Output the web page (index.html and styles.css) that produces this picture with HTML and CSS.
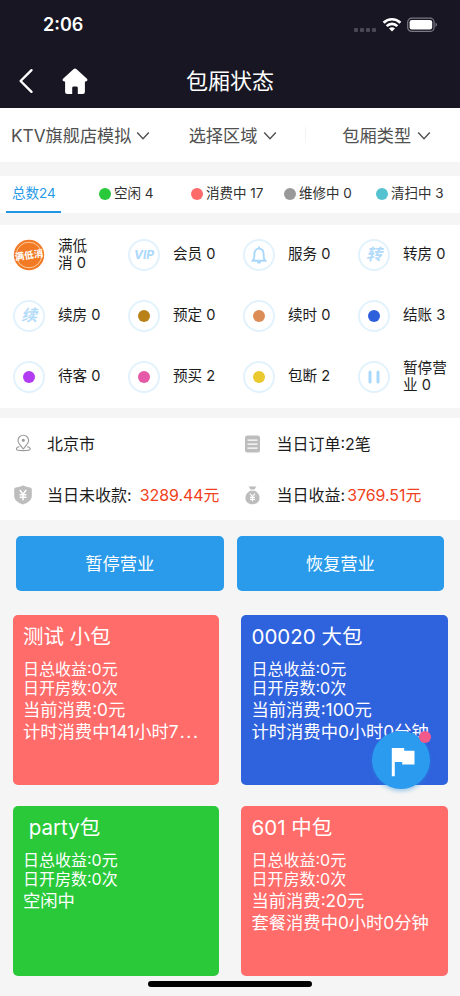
FILE: index.html
```
<!DOCTYPE html>
<html lang="zh-CN">
<head>
<meta charset="utf-8">
<title>包厢状态</title>
<link rel="stylesheet" href="styles.css">
</head>
<body>
<div class="app">
  <header class="header">
    <div class="statusbar">
      <span class="clock">2:06</span>
      <div class="signals">
        <span class="cell"><i></i><i></i><i></i><i></i></span>
        <svg width="20" height="16" viewBox="0 0 20 16" fill="none" stroke="#fff" stroke-width="2.7"><path d="M1.6 5.7a12 12 0 0 1 16.8 0"/><path d="M4.7 9.1a7.5 7.5 0 0 1 10.6 0"/><path d="M10 14.6 7 11.6a4.3 4.3 0 0 1 6 0z" fill="#fff" stroke="none"/></svg>
        <svg width="31" height="16" viewBox="0 0 31 16"><rect x=".7" y="1.2" width="26.4" height="13.2" rx="4" fill="none" stroke="#7b7a83" stroke-width="1.2"/><rect x="2.6" y="3.1" width="22.6" height="9.4" rx="2.2" fill="#fff"/><path d="M28.6 5.6q2.6 2.2 0 4.4z" fill="#8c8b93"/></svg>
      </div>
    </div>
    <div class="navbar">
      <svg class="back" width="16" height="26" viewBox="0 0 16 26" fill="none" stroke="#fff" stroke-width="2.4" stroke-linecap="round" stroke-linejoin="round"><path d="M13.5 2.2 2.6 13l10.9 10.8"/></svg>
      <svg class="home" width="26" height="27" viewBox="0 0 26 27" fill="#fff"><path d="M11.4 1.2q1.6-1.300 3.200 0L25 10.800q1.300 2-1 2.600h-1.100v10.500q0 2.100-2.100 2.100h-5v-6q0-1.400-1.400-1.400h-2.800q-1.400 0-1.400 1.400v6H5.200q-2.100 0-2.100-2.100V13.400H2Q-.3 12.800 1 10.800z"/></svg>
      <h1>包厢状态</h1>
    </div>
  </header>

  <nav class="filters">
    <div class="filter first">KTV旗舰店模拟<svg class="chev" viewBox="0 0 14 10"><path d="M1.2 1.6 7 7.8l5.8-6.2"/></svg></div>
    <div class="filter second">选择区域<svg class="chev" viewBox="0 0 14 10"><path d="M1.2 1.6 7 7.8l5.8-6.2"/></svg></div>
    <div class="filter third">包厢类型<svg class="chev" viewBox="0 0 14 10"><path d="M1.2 1.6 7 7.8l5.8-6.2"/></svg></div>
  </nav>

  <div class="totals">
    <div class="total active">总数24</div>
    <div class="total"><i class="dot green"></i>空闲 4</div>
    <div class="total"><i class="dot red"></i>消费中 17</div>
    <div class="total"><i class="dot gray"></i>维修中 0</div>
    <div class="total"><i class="dot teal"></i>清扫中 3</div>
  </div>

  <section class="states">
    <div class="state"><span class="ring full"><svg viewBox="0 0 32 32"><circle cx="16" cy="16" r="15.2" fill="#f27a25"/><circle cx="16" cy="16" r="12.8" fill="none" stroke="#ffd2a6" stroke-width=".9"/><text x="16" y="19.500" text-anchor="middle" transform="rotate(-8 16 16)">满低消</text></svg></span><span>满低<br>消 0</span></div>
    <div class="state"><span class="ring"><b class="vip">VIP</b></span><span>会员 0</span></div>
    <div class="state"><span class="ring"><svg class="bell" viewBox="0 0 18 20"><path d="M1.500 15.700h15M3.200 15.300c1.200-1.500 1.200-3 1.200-6.200C4.400 5.600 6.200 3.600 9 3.600s4.600 2 4.600 5.500c0 3.200 0 4.700 1.200 6.200M9 3.400V1.500M7.300 17.600h3.400"/></svg></span><span>服务 0</span></div>
    <div class="state"><span class="ring"><b class="glyph">转</b></span><span>转房 0</span></div>
    <div class="state"><span class="ring"><b class="glyph">续</b></span><span>续房 0</span></div>
    <div class="state"><span class="ring"><i class="dot brown"></i></span><span>预定 0</span></div>
    <div class="state"><span class="ring"><i class="dot orange"></i></span><span>续时 0</span></div>
    <div class="state"><span class="ring"><i class="dot blue"></i></span><span>结账 3</span></div>
    <div class="state"><span class="ring"><i class="dot purple"></i></span><span>待客 0</span></div>
    <div class="state"><span class="ring"><i class="dot pink"></i></span><span>预买 2</span></div>
    <div class="state"><span class="ring"><i class="dot yellow"></i></span><span>包断 2</span></div>
    <div class="state"><span class="ring"><svg class="pause" viewBox="0 0 12 14"><path d="M2 2v10M10 2v10"/></svg></span><span>暂停营<br>业 0</span></div>
  </section>

  <section class="summary">
    <div class="fact"><svg viewBox="0 0 20 20" fill="none" stroke="#999" stroke-width="1.1"><path d="M10.3 14.8C7.5 11.7 5 9.2 5 6.5a5.3 5.3 0 0 1 10.6 0c0 2.7-2.5 5.2-5.3 8.3z"/><circle cx="10.3" cy="6.2" r="1" fill="#999"/><path d="M6.5 12.700c-2 .3-3.100 1.200-3.100 2.200 0 1.200 2.800 1.700 6.900 1.700s6.900-.5 6.900-1.700c0-1-1.100-1.900-3.100-2.200"/></svg><span>北京市</span></div>
    <div class="fact"><svg viewBox="0 0 20 20"><rect x="2" y="1.5" width="15" height="17" rx="2.2" fill="#bdbdbd"/><path d="M4.500 6.200h10M4.500 10.200h10M4.500 14.200h10" stroke="#fff" stroke-width="1.3"/></svg><span>当日订单:2笔</span></div>
    <div class="fact"><svg viewBox="0 0 20 20"><path d="M3 2.600Q6.800 2.300 10 .6q3.200 1.700 7 2 1.800.2 1.800 2v6.200c0 4.800-4.200 7.200-8.800 8.700-4.600-1.500-8.800-3.900-8.800-8.700V4.600q0-1.800 1.800-2z" fill="#bdbdbd"/><path d="m6.800 5 3.200 4.200L13.200 5M10 9.200v6M6.600 9.700h6.800M6.600 12.300h6.800" fill="none" stroke="#fff" stroke-width="1.5"/></svg><span>当日未收款:<em class="gap">3289.44元</em></span></div>
    <div class="fact"><svg viewBox="0 0 20 20"><path d="M5.500 1.200q2 .8 4 0 2 .8 4 0l-2 3.300H7.600z" fill="#bdbdbd"/><path d="M7 5.700h5.100c2.700 1.800 4.500 4 4.500 7 0 4-2.800 6.500-7.100 6.500s-7.100-2.500-7.100-6.500c0-3 1.900-5.200 4.600-7z" fill="#bdbdbd"/><path d="m7 8.700 2.500 3 2.500-3M9.500 11.700v4.600M7 12.400h5M7 14.400h5" fill="none" stroke="#fff" stroke-width="1.1"/></svg><span>当日收益:<em>3769.51元</em></span></div>
  </section>

  <div class="actions">
    <button>暂停营业</button>
    <button>恢复营业</button>
  </div>

  <main class="rooms">
    <article class="room busy">
      <h2>测试 小包</h2>
      <p>日总收益:0元</p><p>日开房数:0次</p>
      <p class="big">当前消费:0元</p><p class="big">计时消费中141小时7<span class="more">...</span></p>
    </article>
    <article class="room checkout">
      <h2>00020 大包</h2>
      <p>日总收益:0元</p><p>日开房数:0次</p>
      <p class="big">当前消费:100元</p><p class="big">计时消费中0小时0分钟</p>
    </article>
    <article class="room idle">
      <h2>&nbsp;party包</h2>
      <p>日总收益:0元</p><p>日开房数:0次</p>
      <p class="big">空闲中</p>
    </article>
    <article class="room busy">
      <h2>601 中包</h2>
      <p>日总收益:0元</p><p>日开房数:0次</p>
      <p class="big">当前消费:20元</p><p class="big">套餐消费中0小时0分钟</p>
    </article>
  </main>

  <div class="fab"><svg width="24" height="30" viewBox="0 0 24 30" fill="#fff"><path d="M.8 1h12.400v2.700H23.500v13.800H11.200v-2.600H3.800v14.300H.8z"/></svg><i class="badge"></i></div>
  <div class="indicator"></div>
</div>
</body>
</html>
```
FILE: styles.css
```
* { box-sizing: border-box; margin: 0; padding: 0; }
body { font-family: Inter, "Noto Sans CJK SC", sans-serif; color: #1c1c1c; background: #f5f5f5; }
i, em { font-style: normal; }
svg { display: block; flex: none; }
.app { position: relative; width: 460px; height: 996px; overflow: hidden; white-space: nowrap; }

.header { height: 108px; background: #171622; color: #fff; }
.statusbar { height: 50px; display: flex; justify-content: space-between; padding: 0 22px 0 43px; }
.clock { font-size: 18px; font-weight: 600; line-height: 50px; }
.signals { display: flex; align-items: center; height: 50px; }
.cell { display: flex; gap: 2px; margin: 10px 6px 0 0; }
.cell i { width: 4px; height: 4px; border-radius: 1px; background: #494853; }
.signals svg + svg { margin-left: 5px; }
.navbar { height: 58px; display: grid; grid-template-columns: 62px 1fr 62px; align-items: center; }
.back { grid-area: 1 / 1; margin: 4px 0 0 18px; }
.home { grid-area: 1 / 1 / 2 / 3; margin: 4px 0 0 62px; }
.navbar h1 { grid-area: 1 / 2; text-align: center; font-size: 22px; font-weight: 400; line-height: 30px; margin-top: 3px; }

.filters { height: 54px; background: #fff; display: flex; font-size: 17.2px; color: #505050; }
.filter { display: flex; align-items: center; width: 154px; padding-bottom: 2px; }
.filter.first { width: 153px; padding-left: 11px; }
.filter.second { padding-left: 36px; background: linear-gradient(#f3f3f3, #f3f3f3) 100% 50% / 1px 16px no-repeat; }
.filter.third { padding-left: 36px; }
.chev { width: 14px; height: 10px; margin: 3px 0 0 6px; fill: none; stroke: #505050; stroke-width: 1.4; }
.first .chev { margin-left: 5px; }

.totals { height: 37px; margin-top: 14px; background: #fff; display: grid; grid-template-columns: 99px 92px 93px 92px 84px; font-size: 13.5px; color: #303030; }
.total { display: flex; align-items: center; line-height: 35px; padding-bottom: 2px; }
.total .dot { margin-right: 3px; }
.total.active { color: #2499e8; width: 55px; margin-left: 6px; padding: 0 0 0 6px; border-bottom: 2px solid #2196e6; }
.dot { display: block; flex: none; width: 12px; height: 12px; border-radius: 50%; }
.green { background: #29c93b; }
.red { background: #ff6b6a; }
.gray { background: #999; }
.teal { background: #55c3cf; }
.brown { background: #b98219; }
.orange { background: #dc8d55; }
.blue { background: #2e60dc; }
.purple { background: #b23cf2; }
.pink { background: #e658a8; }
.yellow { background: #e9c92d; }

.states { height: 183px; margin-top: 12px; background: #fff; display: grid; grid-template-columns: repeat(4, 115px); grid-template-rows: repeat(3, 61px); font-size: 14.6px; line-height: 17.5px; }
.state { display: flex; align-items: center; padding: 0 0 1px 13px; }
.ring { flex: none; display: flex; align-items: center; justify-content: center; width: 32px; height: 32px; margin-right: 13px; border: 2px solid #e2f2fd; border-radius: 50%; }
.ring.full { border: 0; }
.ring.full svg { width: 32px; height: 32px; }
.ring text { fill: #fff; font-size: 9.5px; font-weight: 700; }
.vip { font-size: 12px; font-style: italic; color: #a9d8fb; }
.glyph { font-size: 16px; font-style: italic; color: #b2dbfb; }
.bell { width: 18px; height: 20px; fill: none; stroke: #a9d8fb; stroke-width: 1.9; }
.pause { width: 12px; height: 14px; stroke: #a9d8fb; stroke-width: 3; stroke-linecap: round; }

.summary { height: 102px; margin-top: 10px; background: #fff; display: grid; grid-template-columns: 229.5px 230.5px; grid-template-rows: repeat(2, 51px); font-size: 16px; }
.fact { display: flex; align-items: center; padding-left: 13px; }
.fact svg { width: 20px; height: 20px; margin-right: 14px; }
.fact span { margin-top: -2px; }
.fact em { color: #f04120; font-size: 15.9px; margin-left: 2px; }
.fact em.gap { margin-left: 8px; }

.actions { display: flex; gap: 13px; padding: 16px 16px 0; }
.actions button { flex: 1; height: 55px; padding-bottom: 2px; border: 0; border-radius: 5px; background: #299bea; color: #fff; font: 17.3px Inter, "Noto Sans CJK SC", sans-serif; }

.rooms { display: grid; grid-template-columns: 206.5px 206.5px; gap: 21px 22px; padding: 24px 0 0 12.5px; color: #fff; }
.room { height: 170px; border-radius: 5px; padding: 8px 0 0 10.5px; }
.room h2 { font-size: 20.5px; font-weight: 400; line-height: 28px; margin-bottom: 9px; }
.room p { font-size: 16px; line-height: 19px; }
.room p.big { font-size: 17.3px; line-height: 21.5px; position: relative; top: 1px; }
.more { letter-spacing: 1.7px; margin-left: 1px; }
.busy { background: #ff6c6a; }
.checkout { background: #2f62dd; }
.idle { background: #29c93a; }

.fab { position: absolute; left: 372px; top: 731px; width: 58px; height: 58px; border-radius: 50%; background: #2b9bf0; box-shadow: 0 2px 4px rgba(43, 140, 220, .45); display: flex; align-items: center; justify-content: center; padding: 4px 0 0 3px; }
.badge { position: absolute; right: -1px; top: 0; width: 12px; height: 12px; border-radius: 50%; background: #f3598a; }
.indicator { position: absolute; left: 148px; top: 981px; width: 164px; height: 6px; border-radius: 3px; background: #000; }
```
